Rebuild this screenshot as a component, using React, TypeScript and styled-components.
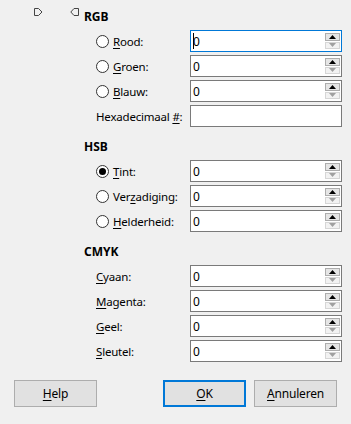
import React from "react";
import styled, { createGlobalStyle } from "styled-components";

const GlobalStyle = createGlobalStyle`
  html, body {
    margin: 0;
    padding: 0;
    background: #f0f0f0;
  }
  body {
    font-family: "Noto Sans", "Open Sans", sans-serif;
    font-size: 11.5px;
    letter-spacing: -0.2px;
    color: #000;
  }
`;

type Row = {
  label: React.ReactNode;
  radio?: boolean;
  checked?: boolean;
  spin?: boolean;
  value?: string;
  focused?: boolean;
};

const rgbRows: Row[] = [
  { label: <><u>R</u>ood:</>, radio: true, spin: true, value: "0", focused: true },
  { label: <><u>G</u>roen:</>, radio: true, spin: true, value: "0" },
  { label: <><u>B</u>lauw:</>, radio: true, spin: true, value: "0" },
  { label: <>Hexadecimaal <u>#</u>:</>, value: "" },
];

const hsbRows: Row[] = [
  { label: <><u>T</u>int:</>, radio: true, checked: true, spin: true, value: "0" },
  { label: <>Ver<u>z</u>adiging:</>, radio: true, spin: true, value: "0" },
  { label: <><u>H</u>elderheid:</>, radio: true, spin: true, value: "0" },
];

const cmykRows: Row[] = [
  { label: <><u>C</u>yaan:</>, spin: true, value: "0" },
  { label: <><u>M</u>agenta:</>, spin: true, value: "0" },
  { label: <><u>G</u>eel:</>, spin: true, value: "0" },
  { label: <><u>S</u>leutel:</>, spin: true, value: "0" },
];

const Section = ({ title, rows }: { title: string; rows: Row[] }) => (
  <Group>
    <Heading>{title}</Heading>
    {rows.map((r, i) => (
      <FieldRow key={i}>
        <Label>
          {r.radio && <Radio $checked={r.checked} />}
          <span>{r.label}</span>
        </Label>
        <Field $focused={r.focused}>
          <Value>
            {r.focused && <Caret />}
            {r.value}
          </Value>
          {r.spin && (
            <Spinner>
              <SpinBtn>
                <svg width="7" height="4" viewBox="0 0 7 4">
                  <path d="M0 4 L3.5 0 L7 4 Z" fill="#000" />
                </svg>
              </SpinBtn>
              <SpinBtn $disabled>
                <svg width="7" height="4" viewBox="0 0 7 4">
                  <path d="M0 0 L7 0 L3.5 4 Z" fill="#a0a0a0" />
                </svg>
              </SpinBtn>
            </Spinner>
          )}
        </Field>
      </FieldRow>
    ))}
  </Group>
);

const App = () => {
  return (
    <Dialog>
      <GlobalStyle />
      <Top>
        <Gutter>
          <svg width="9" height="8" viewBox="0 0 9 8">
            <path d="M0.5 0.5 H4.5 L8 4 L4.5 7.5 H0.5 Z" fill="none" stroke="#444" />
          </svg>
          <svg width="9" height="8" viewBox="0 0 9 8">
            <path d="M8.5 0.5 H4 L0.8 4 L4 7.5 H8.5 Z" fill="none" stroke="#444" />
          </svg>
        </Gutter>
        <Form>
          <Section title="RGB" rows={rgbRows} />
          <Section title="HSB" rows={hsbRows} />
          <Section title="CMYK" rows={cmykRows} />
        </Form>
      </Top>
      <ButtonBar>
        <Button><u>H</u>elp</Button>
        <Spacer />
        <Button $default><u>O</u>K</Button>
        <Button><u>A</u>nnuleren</Button>
      </ButtonBar>
    </Dialog>
  );
};

// Styled Components

const Dialog = styled.div`
  width: 351px;
  height: 424px;
  background: #f0f0f0;
  display: flex;
  flex-direction: column;
  overflow: hidden;
`;

const Top = styled.div`
  display: flex;
  padding-left: 34px;
`;

const Gutter = styled.div`
  display: flex;
  gap: 27px;
  padding-top: 8px;
  width: 50px;
  align-items: flex-start;
`;

const Form = styled.div`
  display: flex;
  flex-direction: column;
  gap: 10px;
  padding-top: 7px;
  width: 258px;
`;

const Group = styled.div`
  display: flex;
  flex-direction: column;
  gap: 3px;
`;

const Heading = styled.div`
  height: 20px;
  line-height: 20px;
  font-size: 12px;
  letter-spacing: 0;
  font-weight: bold;
`;

const FieldRow = styled.div`
  display: grid;
  grid-template-columns: 94px 152px;
  padding-left: 12px;
  align-items: center;
`;

const Label = styled.label`
  display: flex;
  align-items: center;
  gap: 4px;
  white-space: nowrap;
  u {
    text-underline-offset: 2px;
  }
`;

const Radio = styled.span<{ $checked?: boolean }>`
  width: 11px;
  height: 11px;
  border: 1px solid #333;
  border-radius: 50%;
  background: #fff;
  display: flex;
  align-items: center;
  justify-content: center;
  &::after {
    content: "";
    width: 7px;
    height: 7px;
    border-radius: 50%;
    background: #000;
    display: ${(p) => (p.$checked ? "block" : "none")};
  }
`;

const Field = styled.div<{ $focused?: boolean }>`
  height: 22px;
  box-sizing: border-box;
  border: 1px solid ${(p) => (p.$focused ? "#0078d7" : "#7a7a7a")};
  background: #fff;
  display: flex;
  align-items: stretch;
  padding: 1px 1px 1px 2px;
  font-size: 12px;
`;

const Value = styled.div`
  flex: 1;
  display: flex;
  align-items: center;
`;

const Caret = styled.span`
  width: 1px;
  height: 16px;
  background: #000;
  margin-right: -1px;
`;

const Spinner = styled.div`
  width: 15px;
  display: flex;
  flex-direction: column;
  gap: 1px;
  padding: 1px 0;
`;

const SpinBtn = styled.div<{ $disabled?: boolean }>`
  flex: 1;
  box-sizing: border-box;
  border: 1px solid ${(p) => (p.$disabled ? "#d6d6d6" : "#adadad")};
  background: ${(p) => (p.$disabled ? "#f2f2f2" : "#e5e5e5")};
  display: flex;
  align-items: center;
  justify-content: center;
`;

const ButtonBar = styled.div`
  display: flex;
  gap: 8px;
  padding: 0 14px;
  margin-top: 18px;
`;

const Spacer = styled.div`
  flex: 1;
`;

const Button = styled.div<{ $default?: boolean }>`
  width: 83px;
  height: 27px;
  box-sizing: border-box;
  border: ${(p) => (p.$default ? "2px solid #0078d7" : "1px solid #adadad")};
  background: #e1e1e1;
  display: flex;
  align-items: center;
  justify-content: center;
  font-size: 12px;
  u {
    text-underline-offset: 2px;
  }
`;

export default App;
